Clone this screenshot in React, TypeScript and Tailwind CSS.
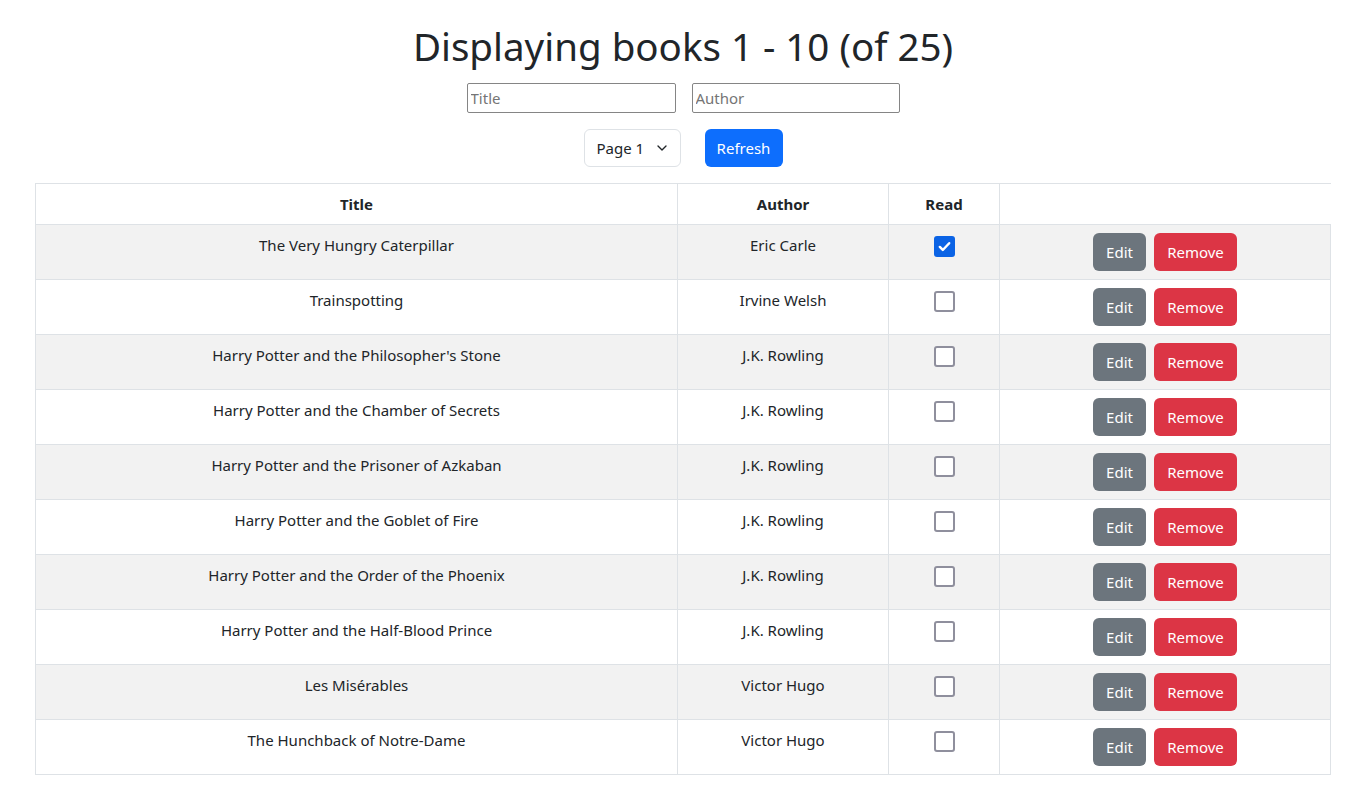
import { ChevronDown } from "lucide-react";

interface Book {
  title: string;
  author: string;
  read: boolean;
}

const books: Book[] = [
  { title: "The Very Hungry Caterpillar", author: "Eric Carle", read: true },
  { title: "Trainspotting", author: "Irvine Welsh", read: false },
  { title: "Harry Potter and the Philosopher's Stone", author: "J.K. Rowling", read: false },
  { title: "Harry Potter and the Chamber of Secrets", author: "J.K. Rowling", read: false },
  { title: "Harry Potter and the Prisoner of Azkaban", author: "J.K. Rowling", read: false },
  { title: "Harry Potter and the Goblet of Fire", author: "J.K. Rowling", read: false },
  { title: "Harry Potter and the Order of the Phoenix", author: "J.K. Rowling", read: false },
  { title: "Harry Potter and the Half-Blood Prince", author: "J.K. Rowling", read: false },
  { title: "Les Misérables", author: "Victor Hugo", read: false },
  { title: "The Hunchback of Notre-Dame", author: "Victor Hugo", read: false },
];

function ReadBox({ checked }: { checked: boolean }) {
  if (checked) {
    return (
      <span className="inline-flex h-[21px] w-[21px] items-center justify-center rounded-[3px] bg-[#0b63e5]">
        <svg className="h-[15px] w-[15px]" viewBox="0 0 16 16" fill="none" stroke="white" strokeWidth={2.6} strokeLinecap="round" strokeLinejoin="round">
          <path d="M3 8.5l3.2 3.2L13 4.5" />
        </svg>
      </span>
    );
  }
  return <span className="inline-block h-[21px] w-[21px] rounded-[3px] border-2 border-[#8f8f9d] bg-white" />;
}

export default function App() {
  return (
    <div className="min-h-screen bg-white px-[35px] pt-[20px] text-[#212529] [font-family:'Noto_Sans',sans-serif]">
      <div className="w-[1296px]">
        <h1 className="text-center text-[38.5px] leading-[52px] font-normal">Displaying books 1 - 10 (of 25)</h1>

        <div className="mt-[11px] flex justify-center gap-4">
          <input
            placeholder="Title"
            className="h-[30px] w-[209px] rounded-[2px] border border-[#858585] px-[3px] text-[15px] placeholder:text-[#757575] outline-none"
          />
          <input
            placeholder="Author"
            className="h-[30px] w-[208px] rounded-[2px] border border-[#858585] px-[3px] text-[15px] placeholder:text-[#757575] outline-none"
          />
        </div>

        <div className="mt-[16px] flex justify-center gap-6">
          <div className="flex h-[38px] w-[97px] items-center gap-[10px] rounded-[6px] border border-[#dee2e6] pl-[12px] text-[15px]">
            <span>Page 1</span>
            <ChevronDown className="h-[16px] w-[16px]" strokeWidth={2} />
          </div>
          <button className="h-[38px] w-[78px] rounded-[6px] bg-[#0d6efd] text-[15px] text-white">Refresh</button>
        </div>
      </div>

      <table className="mt-[16px] w-[1295px] table-fixed border-collapse text-[15px]">
        <colgroup>
          <col className="w-[642px]" />
          <col className="w-[211px]" />
          <col className="w-[111px]" />
          <col className="w-[331px]" />
        </colgroup>
        <thead>
          <tr className="h-[41px] border-t border-[#dee2e6]">
            <th className="border-l border-r border-[#dee2e6] px-2 font-bold">Title</th>
            <th className="border-r border-[#dee2e6] px-2 font-bold">Author</th>
            <th className="border-r border-[#dee2e6] px-2 font-bold">Read</th>
            <th />
          </tr>
        </thead>
        <tbody>
          {books.map((b, i) => (
            <tr key={b.title} className={i % 2 === 0 ? "bg-[#f2f2f2]" : "bg-white"}>
              <td className="border border-[#dee2e6] px-2 pt-[8px] text-center align-top leading-6">{b.title}</td>
              <td className="border border-[#dee2e6] px-2 pt-[8px] text-center align-top leading-6">{b.author}</td>
              <td className="border border-[#dee2e6] px-2 pt-[11px] text-center align-top leading-none">
                <ReadBox checked={b.read} />
              </td>
              <td className="border border-[#dee2e6] py-[8px] align-top">
                <div className="flex justify-center gap-2">
                  <button className="h-[38px] w-[53px] rounded-[6px] bg-[#6c757d] text-white">Edit</button>
                  <button className="h-[38px] w-[83px] rounded-[6px] bg-[#dc3545] text-white">Remove</button>
                </div>
              </td>
            </tr>
          ))}
        </tbody>
      </table>
    </div>
  );
}
